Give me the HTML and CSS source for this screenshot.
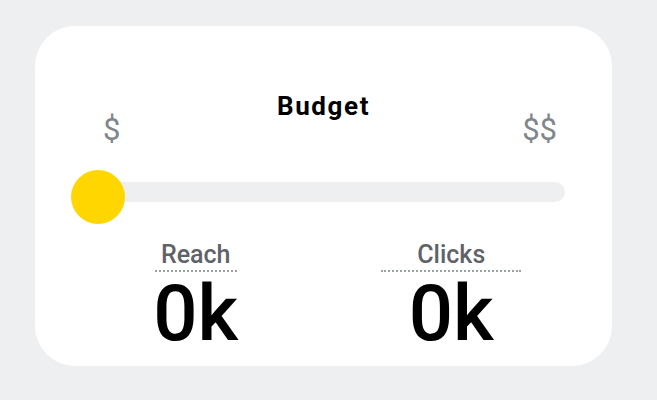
FILE: index.html
```html
<html>
    <head>
        <title>Budget</title>
        <link rel="stylesheet" href="styles.css">
    </head>
    <body>
        <div class="card">
            <h1 class="title">Budget</h1>
            <div class="range-labels">
                <span>$</span>
                <span>$$</span>
            </div>
            <div class="slider">
                <div class="track"></div>
                <div class="thumb"></div>
            </div>
            <div class="stats">
                <div class="stat">
                    <span class="stat-label">Reach</span>
                    <span class="stat-value">0k</span>
                </div>
                <div class="stat">
                    <span class="stat-label wide">Clicks</span>
                    <span class="stat-value">0k</span>
                </div>
            </div>
        </div>
    </body>
</html>
```

FILE: styles.css
```css
body {
    margin: 0;
    background-color: #eeeff0;
    font-family: Roboto, "Liberation Sans", sans-serif;
}

.card {
    box-sizing: border-box;
    width: 577px;
    height: 340px;
    margin: 26px 0 0 35px;
    padding: 65px 33px 0 33px;
    background-color: #fff;
    border-radius: 40px;
}

.title {
    margin: 0;
    text-align: center;
    font-size: 26px;
    line-height: 30px;
    font-weight: 700;
    letter-spacing: 1.6px;
    color: #000;
}

.range-labels {
    display: flex;
    justify-content: space-between;
    padding: 0 22px 0 35px;
    margin-top: -9px;
    font-size: 31px;
    line-height: 36px;
    color: #80868b;
}

.slider {
    position: relative;
    height: 54px;
    margin-top: 22px;
}

.track {
    height: 20px;
    margin: 0 14px 0 4px;
    position: relative;
    top: 12px;
    border-radius: 10px;
    background-color: #eeeff0;
}

.thumb {
    position: absolute;
    left: 3px;
    top: 0;
    width: 54px;
    height: 54px;
    border-radius: 50%;
    background-color: #ffd600;
}

.stats {
    display: grid;
    grid-template-columns: 1fr 1fr;
    margin-top: 16px;
}

.stat {
    display: flex;
    flex-direction: column;
    align-items: center;
}

.stat-label {
    padding: 0 6px 0 6px;
    font-size: 25px;
    line-height: 30px;
    font-weight: 500;
    color: #5f6368;
    border-bottom: 2px dotted #9aa0a6;
}

.stat-label.wide {
    padding: 0 36px 0 36px;
}

.stat-value {
    margin-top: 1px;
    font-size: 78px;
    line-height: 82px;
    font-weight: 500;
    color: #000;
}
```
